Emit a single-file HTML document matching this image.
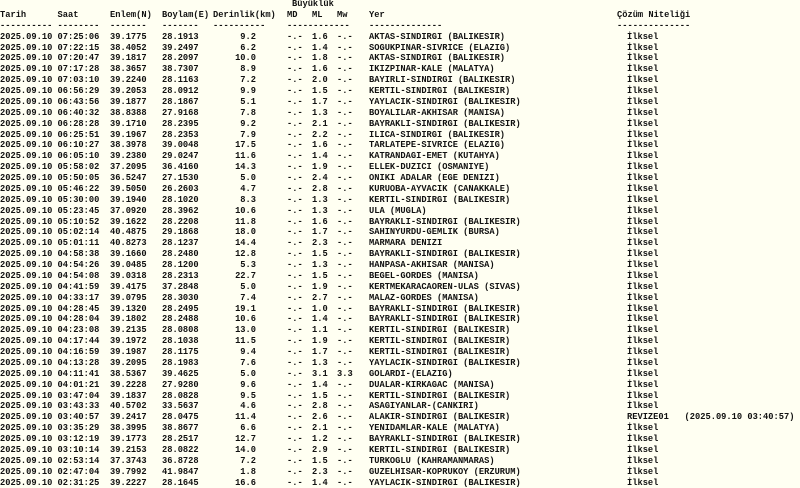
<!DOCTYPE html>
<html><head><meta charset="utf-8"><style>
html,body{margin:0;padding:0;background:#fffff2;width:800px;height:488px;overflow:hidden}
body{font-family:"Liberation Mono",monospace;font-weight:bold;font-size:8.72px;color:#111;}
#w{position:relative;top:-1px}
.r{position:relative;height:10.88px;line-height:10.88px;white-space:pre}
.r span{position:absolute;top:0}
.r span:nth-child(1){left:0}
.r span:nth-child(2){left:57.5px}
.r span:nth-child(3){left:110px}
.r span:nth-child(4){left:162px}
.r span:nth-child(5){left:205px;width:51px;text-align:right}
.r span:nth-child(6){left:287px}
.r span:nth-child(7){left:312px}
.r span:nth-child(8){left:337px}
.r span:nth-child(9){left:369px}
.r span:nth-child(10){left:627px}
.h span{position:absolute;top:0}
</style></head><body><div id="w">
<div class="r h"><span style="left:292px">Büyüklük</span></div>
<div class="r h"><span style="left:0">Tarih</span><span style="left:57.5px">Saat</span><span style="left:110px">Enlem(N)</span><span style="left:162px">Boylam(E)</span><span style="left:213px">Derinlik(km)</span><span style="left:287px">MD</span><span style="left:312px">ML</span><span style="left:337px">Mw</span><span style="left:369px">Yer</span><span style="left:617px">Çözüm Niteliği</span></div>
<div class="r h"><span style="left:0">----------</span><span style="left:57.5px">--------</span><span style="left:110px">-------</span><span style="left:162px">-------</span><span style="left:213px">----------</span><span style="left:287px">------------</span><span style="left:369px">--------------</span><span style="left:617px">--------------</span></div>
<div class="r"><span>2025.09.10</span><span>07:25:06</span><span>39.1775</span><span>28.1913</span><span>9.2</span><span>-.-</span><span>1.6</span><span>-.-</span><span>AKTAS-SINDIRGI (BALIKESIR)</span><span>İlksel</span></div>
<div class="r"><span>2025.09.10</span><span>07:22:15</span><span>38.4052</span><span>39.2497</span><span>6.2</span><span>-.-</span><span>1.4</span><span>-.-</span><span>SOGUKPINAR-SIVRICE (ELAZIG)</span><span>İlksel</span></div>
<div class="r"><span>2025.09.10</span><span>07:20:47</span><span>39.1817</span><span>28.2097</span><span>10.0</span><span>-.-</span><span>1.8</span><span>-.-</span><span>AKTAS-SINDIRGI (BALIKESIR)</span><span>İlksel</span></div>
<div class="r"><span>2025.09.10</span><span>07:17:28</span><span>38.3657</span><span>38.7307</span><span>8.9</span><span>-.-</span><span>1.6</span><span>-.-</span><span>IKIZPINAR-KALE (MALATYA)</span><span>İlksel</span></div>
<div class="r"><span>2025.09.10</span><span>07:03:10</span><span>39.2240</span><span>28.1163</span><span>7.2</span><span>-.-</span><span>2.0</span><span>-.-</span><span>BAYIRLI-SINDIRGI (BALIKESIR)</span><span>İlksel</span></div>
<div class="r"><span>2025.09.10</span><span>06:56:29</span><span>39.2053</span><span>28.0912</span><span>9.9</span><span>-.-</span><span>1.5</span><span>-.-</span><span>KERTIL-SINDIRGI (BALIKESIR)</span><span>İlksel</span></div>
<div class="r"><span>2025.09.10</span><span>06:43:56</span><span>39.1877</span><span>28.1867</span><span>5.1</span><span>-.-</span><span>1.7</span><span>-.-</span><span>YAYLACIK-SINDIRGI (BALIKESIR)</span><span>İlksel</span></div>
<div class="r"><span>2025.09.10</span><span>06:40:32</span><span>38.8388</span><span>27.9168</span><span>7.8</span><span>-.-</span><span>1.3</span><span>-.-</span><span>BOYALILAR-AKHISAR (MANISA)</span><span>İlksel</span></div>
<div class="r"><span>2025.09.10</span><span>06:28:28</span><span>39.1710</span><span>28.2395</span><span>9.2</span><span>-.-</span><span>2.1</span><span>-.-</span><span>BAYRAKLI-SINDIRGI (BALIKESIR)</span><span>İlksel</span></div>
<div class="r"><span>2025.09.10</span><span>06:25:51</span><span>39.1967</span><span>28.2353</span><span>7.9</span><span>-.-</span><span>2.2</span><span>-.-</span><span>ILICA-SINDIRGI (BALIKESIR)</span><span>İlksel</span></div>
<div class="r"><span>2025.09.10</span><span>06:10:27</span><span>38.3978</span><span>39.0048</span><span>17.5</span><span>-.-</span><span>1.6</span><span>-.-</span><span>TARLATEPE-SIVRICE (ELAZIG)</span><span>İlksel</span></div>
<div class="r"><span>2025.09.10</span><span>06:05:10</span><span>39.2380</span><span>29.0247</span><span>11.6</span><span>-.-</span><span>1.4</span><span>-.-</span><span>KATRANDAGI-EMET (KUTAHYA)</span><span>İlksel</span></div>
<div class="r"><span>2025.09.10</span><span>05:58:02</span><span>37.2095</span><span>36.4160</span><span>14.3</span><span>-.-</span><span>1.9</span><span>-.-</span><span>ELLEK-DUZICI (OSMANIYE)</span><span>İlksel</span></div>
<div class="r"><span>2025.09.10</span><span>05:50:05</span><span>36.5247</span><span>27.1530</span><span>5.0</span><span>-.-</span><span>2.4</span><span>-.-</span><span>ONIKI ADALAR (EGE DENIZI)</span><span>İlksel</span></div>
<div class="r"><span>2025.09.10</span><span>05:46:22</span><span>39.5050</span><span>26.2603</span><span>4.7</span><span>-.-</span><span>2.8</span><span>-.-</span><span>KURUOBA-AYVACIK (CANAKKALE)</span><span>İlksel</span></div>
<div class="r"><span>2025.09.10</span><span>05:30:00</span><span>39.1940</span><span>28.1020</span><span>8.3</span><span>-.-</span><span>1.3</span><span>-.-</span><span>KERTIL-SINDIRGI (BALIKESIR)</span><span>İlksel</span></div>
<div class="r"><span>2025.09.10</span><span>05:23:45</span><span>37.0920</span><span>28.3962</span><span>10.6</span><span>-.-</span><span>1.3</span><span>-.-</span><span>ULA (MUGLA)</span><span>İlksel</span></div>
<div class="r"><span>2025.09.10</span><span>05:10:52</span><span>39.1622</span><span>28.2208</span><span>11.8</span><span>-.-</span><span>1.6</span><span>-.-</span><span>BAYRAKLI-SINDIRGI (BALIKESIR)</span><span>İlksel</span></div>
<div class="r"><span>2025.09.10</span><span>05:02:14</span><span>40.4875</span><span>29.1868</span><span>18.0</span><span>-.-</span><span>1.7</span><span>-.-</span><span>SAHINYURDU-GEMLIK (BURSA)</span><span>İlksel</span></div>
<div class="r"><span>2025.09.10</span><span>05:01:11</span><span>40.8273</span><span>28.1237</span><span>14.4</span><span>-.-</span><span>2.3</span><span>-.-</span><span>MARMARA DENIZI</span><span>İlksel</span></div>
<div class="r"><span>2025.09.10</span><span>04:58:38</span><span>39.1660</span><span>28.2480</span><span>12.8</span><span>-.-</span><span>1.5</span><span>-.-</span><span>BAYRAKLI-SINDIRGI (BALIKESIR)</span><span>İlksel</span></div>
<div class="r"><span>2025.09.10</span><span>04:54:26</span><span>39.0485</span><span>28.1200</span><span>5.3</span><span>-.-</span><span>1.3</span><span>-.-</span><span>HANPASA-AKHISAR (MANISA)</span><span>İlksel</span></div>
<div class="r"><span>2025.09.10</span><span>04:54:08</span><span>39.0318</span><span>28.2313</span><span>22.7</span><span>-.-</span><span>1.5</span><span>-.-</span><span>BEGEL-GORDES (MANISA)</span><span>İlksel</span></div>
<div class="r"><span>2025.09.10</span><span>04:41:59</span><span>39.4175</span><span>37.2848</span><span>5.0</span><span>-.-</span><span>1.9</span><span>-.-</span><span>KERTMEKARACAOREN-ULAS (SIVAS)</span><span>İlksel</span></div>
<div class="r"><span>2025.09.10</span><span>04:33:17</span><span>39.0795</span><span>28.3030</span><span>7.4</span><span>-.-</span><span>2.7</span><span>-.-</span><span>MALAZ-GORDES (MANISA)</span><span>İlksel</span></div>
<div class="r"><span>2025.09.10</span><span>04:28:45</span><span>39.1320</span><span>28.2495</span><span>19.1</span><span>-.-</span><span>1.0</span><span>-.-</span><span>BAYRAKLI-SINDIRGI (BALIKESIR)</span><span>İlksel</span></div>
<div class="r"><span>2025.09.10</span><span>04:28:04</span><span>39.1802</span><span>28.2488</span><span>10.6</span><span>-.-</span><span>1.4</span><span>-.-</span><span>BAYRAKLI-SINDIRGI (BALIKESIR)</span><span>İlksel</span></div>
<div class="r"><span>2025.09.10</span><span>04:23:08</span><span>39.2135</span><span>28.0808</span><span>13.0</span><span>-.-</span><span>1.1</span><span>-.-</span><span>KERTIL-SINDIRGI (BALIKESIR)</span><span>İlksel</span></div>
<div class="r"><span>2025.09.10</span><span>04:17:44</span><span>39.1972</span><span>28.1038</span><span>11.5</span><span>-.-</span><span>1.9</span><span>-.-</span><span>KERTIL-SINDIRGI (BALIKESIR)</span><span>İlksel</span></div>
<div class="r"><span>2025.09.10</span><span>04:16:59</span><span>39.1987</span><span>28.1175</span><span>9.4</span><span>-.-</span><span>1.7</span><span>-.-</span><span>KERTIL-SINDIRGI (BALIKESIR)</span><span>İlksel</span></div>
<div class="r"><span>2025.09.10</span><span>04:13:28</span><span>39.2095</span><span>28.1983</span><span>7.6</span><span>-.-</span><span>1.3</span><span>-.-</span><span>YAYLACIK-SINDIRGI (BALIKESIR)</span><span>İlksel</span></div>
<div class="r"><span>2025.09.10</span><span>04:11:41</span><span>38.5367</span><span>39.4625</span><span>5.0</span><span>-.-</span><span>3.1</span><span>3.3</span><span>GOLARDI-(ELAZIG)</span><span>İlksel</span></div>
<div class="r"><span>2025.09.10</span><span>04:01:21</span><span>39.2228</span><span>27.9280</span><span>9.6</span><span>-.-</span><span>1.4</span><span>-.-</span><span>DUALAR-KIRKAGAC (MANISA)</span><span>İlksel</span></div>
<div class="r"><span>2025.09.10</span><span>03:47:04</span><span>39.1837</span><span>28.0828</span><span>9.5</span><span>-.-</span><span>1.5</span><span>-.-</span><span>KERTIL-SINDIRGI (BALIKESIR)</span><span>İlksel</span></div>
<div class="r"><span>2025.09.10</span><span>03:43:33</span><span>40.5702</span><span>33.5637</span><span>4.6</span><span>-.-</span><span>2.8</span><span>-.-</span><span>ASAGIYANLAR-(CANKIRI)</span><span>İlksel</span></div>
<div class="r"><span>2025.09.10</span><span>03:40:57</span><span>39.2417</span><span>28.0475</span><span>11.4</span><span>-.-</span><span>2.6</span><span>-.-</span><span>ALAKIR-SINDIRGI (BALIKESIR)</span><span>REVIZE01   (2025.09.10 03:40:57)</span></div>
<div class="r"><span>2025.09.10</span><span>03:35:29</span><span>38.3995</span><span>38.8677</span><span>6.6</span><span>-.-</span><span>2.1</span><span>-.-</span><span>YENIDAMLAR-KALE (MALATYA)</span><span>İlksel</span></div>
<div class="r"><span>2025.09.10</span><span>03:12:19</span><span>39.1773</span><span>28.2517</span><span>12.7</span><span>-.-</span><span>1.2</span><span>-.-</span><span>BAYRAKLI-SINDIRGI (BALIKESIR)</span><span>İlksel</span></div>
<div class="r"><span>2025.09.10</span><span>03:10:14</span><span>39.2153</span><span>28.0822</span><span>14.0</span><span>-.-</span><span>2.9</span><span>-.-</span><span>KERTIL-SINDIRGI (BALIKESIR)</span><span>İlksel</span></div>
<div class="r"><span>2025.09.10</span><span>02:53:14</span><span>37.3743</span><span>36.8728</span><span>7.2</span><span>-.-</span><span>1.5</span><span>-.-</span><span>TURKOGLU (KAHRAMANMARAS)</span><span>İlksel</span></div>
<div class="r"><span>2025.09.10</span><span>02:47:04</span><span>39.7992</span><span>41.9847</span><span>1.8</span><span>-.-</span><span>2.3</span><span>-.-</span><span>GUZELHISAR-KOPRUKOY (ERZURUM)</span><span>İlksel</span></div>
<div class="r"><span>2025.09.10</span><span>02:31:25</span><span>39.2227</span><span>28.1645</span><span>16.6</span><span>-.-</span><span>1.4</span><span>-.-</span><span>YAYLACIK-SINDIRGI (BALIKESIR)</span><span>İlksel</span></div>
</div></body></html>
